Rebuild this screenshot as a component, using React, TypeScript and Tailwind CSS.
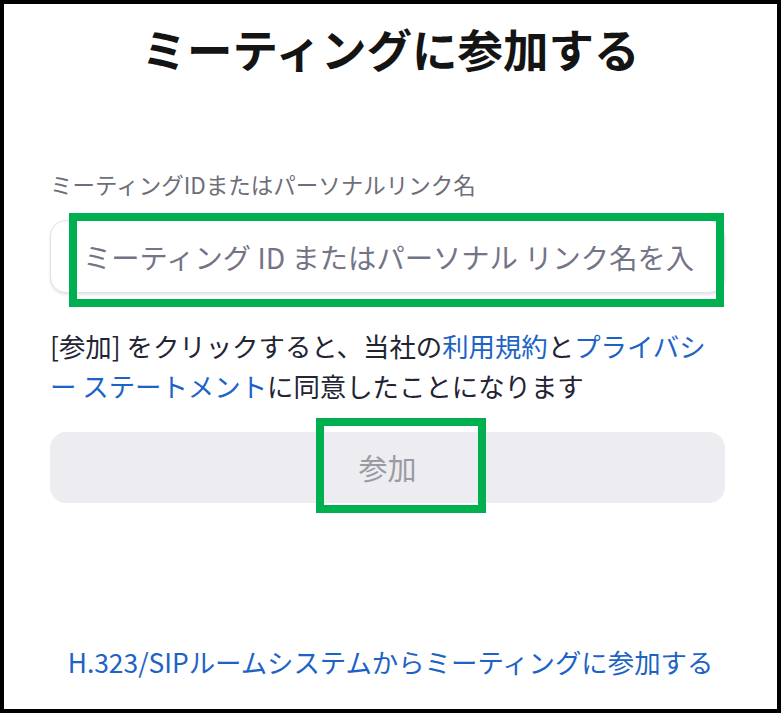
export default function App() {
  return (
    <div className="relative flex h-[713px] w-[781px] flex-col border-4 border-black bg-white font-['Noto_Sans_CJK_JP','Noto_Sans',sans-serif] text-[#232333]">
      <h1 className="mt-[16px] text-center text-[45.5px] font-bold leading-[56px] text-[#141414]">
        ミーティングに参加する
      </h1>

      <div className="ml-[46px] mt-[93px] flex w-[675px] flex-col">
        <label className="text-[22.5px] leading-[30px] text-[#6e6e7a]">
          ミーティングIDまたはパーソナルリンク名
        </label>

        <input
          type="text"
          placeholder="ミーティング ID またはパーソナル リンク名を入"
          className="mt-[21px] h-[73px] w-full rounded-[16px] border border-[#e2e2e6] bg-white pl-[32px] pr-[6px] text-[28.3px] shadow-[0_2px_3px_rgba(0,0,0,0.10)] outline-none placeholder:text-[#747487]"
        />

        <p className="mt-[33px] text-[26.4px] leading-[40px]">
          [参加] をクリックすると、当社の
          <a href="#" className="text-[#1d63c6]">利用規約</a>
          と
          <a href="#" className="text-[#1d63c6]">
            プライバシ
            <br />ー ステートメント
          </a>
          に同意したことになります
        </p>

        <button
          disabled
          className="mt-[26px] flex h-[71px] w-full items-center justify-center rounded-[16px] bg-[#ededf1] text-[29px] text-[#9a9aa3]"
        >
          参加
        </button>
      </div>

      <a
        href="#"
        className="mt-auto mb-[30px] text-center text-[26.4px] leading-[34px] text-[#1d63c6]"
      >
        H.323/SIPルームシステムからミーティングに参加する
      </a>

      {/* annotation frames */}
      <div className="pointer-events-none absolute left-[65px] top-[209px] h-[94px] w-[655px] border-[8px] border-[#00b050]" />
      <div className="pointer-events-none absolute left-[312px] top-[414px] h-[95px] w-[170px] border-[8px] border-[#00b050]" />
    </div>
  );
}
